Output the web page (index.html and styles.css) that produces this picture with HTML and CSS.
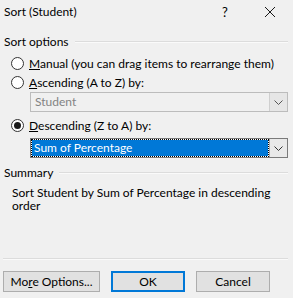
FILE: index.html
```html
<!DOCTYPE html>
<html>
<head>
<meta charset="utf-8">
<link rel="stylesheet" href="styles.css">
</head>
<body>
<div class="dialog">
  <div class="titlebar">
    <span class="title">Sort (Student)</span>
    <span class="help">?</span>
    <span class="close">
      <svg width="12" height="12" viewBox="0 0 12 12"><path d="M1 1 L11 11 M11 1 L1 11" stroke="#1a1a1a" stroke-width="1" fill="none"/></svg>
    </span>
  </div>
  <div class="content">
    <div class="group-head">Sort options</div>
    <div class="radio-row r-manual"><span class="radio"></span><span class="label"><u>M</u>anual (you can drag items to rearrange them)</span></div>
    <div class="radio-row"><span class="radio"></span><span class="label"><u>A</u>scending (A to Z) by:</span></div>
    <div class="combo disabled">
      <span class="combo-text">Student</span>
      <span class="combo-btn"><svg width="9" height="5" viewBox="0 0 9 5"><path d="M0.5 0.5 L4.5 4.5 L8.5 0.5" stroke="#555" fill="none"/></svg></span>
    </div>
    <div class="radio-row r-desc"><span class="radio checked"></span><span class="label"><u>D</u>escending (Z to A) by:</span></div>
    <div class="combo active">
      <span class="combo-text"><span class="sel">Sum of Percentage</span></span>
      <span class="combo-btn"><svg width="9" height="5" viewBox="0 0 9 5"><path d="M0.5 0.5 L4.5 4.5 L8.5 0.5" stroke="#333" fill="none"/></svg></span>
    </div>
    <div class="group-head summary-head">Summary</div>
    <div class="summary-text">Sort Student by Sum of Percentage in descending<br>order</div>
  </div>
  <div class="separator"></div>
  <div class="buttons">
    <button class="btn more">Mo<u>r</u>e Options...</button>
    <button class="btn ok">OK</button>
    <button class="btn cancel">Cancel</button>
  </div>
</div>
</body>
</html>
```
FILE: styles.css
```css
html, body {
  margin: 0;
  padding: 0;
  background: #f0f0f0;
}
.dialog {
  width: 293px;
  height: 298px;
  font-family: "Lato", "Liberation Sans", sans-serif;
  font-size: 12px;
  line-height: 16px;
  color: #000;
  position: relative;
}
.titlebar {
  height: 24px;
  line-height: 24px;
  display: flex;
  align-items: center;
  padding-left: 4px;
}
.title {
  flex: 1;
}
.help {
  width: 12px;
  margin-right: 30px;
  font-size: 13px;
}
.close {
  width: 12px;
  height: 12px;
  margin-right: 17px;
  display: flex;
}
.content {
  padding: 0 5px 0 4px;
}
.group-head {
  display: flex;
  align-items: center;
  margin-top: 10px;
  height: 16px;
  line-height: 16px;
}
.group-head::after {
  content: "";
  flex: 1;
  height: 1px;
  background: #dcdcdc;
  margin-left: 6px;
  border-bottom: 1px solid #fafafa;
}
.radio-row {
  display: flex;
  align-items: center;
  height: 19px;
}
.r-manual {
  margin-top: 4px;
}
.r-desc {
  margin-top: 4px;
}
.radio {
  width: 11px;
  height: 11px;
  border: 1px solid #333;
  border-radius: 50%;
  background: #fff;
  margin-left: 7px;
  margin-right: 5px;
  box-sizing: content-box;
  display: flex;
  align-items: center;
  justify-content: center;
  flex: none;
}
.radio.checked::after {
  content: "";
  width: 7px;
  height: 7px;
  border-radius: 50%;
  background: #1a1a1a;
}
.label {
  white-space: nowrap;
}
.combo {
  margin-left: 26px;
  height: 20px;
  box-sizing: border-box;
  display: flex;
  border: 1px solid #bcbcbc;
  background: #f0f0f0;
}
.combo.active {
  margin-top: 3px;
  border-color: #7a7a7a;
  background: #fff;
}
.combo-text {
  flex: 1;
  display: flex;
  align-items: center;
  padding-left: 4px;
}
.combo.disabled .combo-text {
  color: #838383;
}
.combo.active .combo-text {
  padding: 1px;
}
.sel {
  flex: 1;
  align-self: stretch;
  background: #0078d7;
  color: #fff;
  outline: 1px dotted #000;
  display: flex;
  align-items: center;
  padding-left: 2px;
}
.combo-btn {
  width: 17px;
  display: flex;
  align-items: center;
  justify-content: center;
  background: #e6e6e6;
  border-left: 1px solid #cfcfcf;
}
.combo.active .combo-btn {
  background: #e9e9e9;
  border-left-color: #a8a8a8;
}
.summary-head {
  margin-top: 7px;
}
.summary-text {
  margin-top: 5px;
  padding-left: 8px;
  line-height: 13px;
  white-space: nowrap;
}
.separator {
  margin: 46px 5px 0 3px;
  height: 1px;
  background: #dcdcdc;
  border-bottom: 1px solid #fafafa;
}
.buttons {
  display: flex;
  margin-top: 11px;
  padding-left: 3px;
  gap: 11px;
}
.btn {
  height: 21px;
  box-sizing: border-box;
  font-family: "Lato", "Liberation Sans", sans-serif;
  font-size: 12px;
  color: #000;
  background: #e1e1e1;
  border: 1px solid #adadad;
  padding: 0;
  width: 74px;
}
.btn.more {
  width: 97px;
}
.btn.ok {
  border: 2px solid #0078d7;
}
```
